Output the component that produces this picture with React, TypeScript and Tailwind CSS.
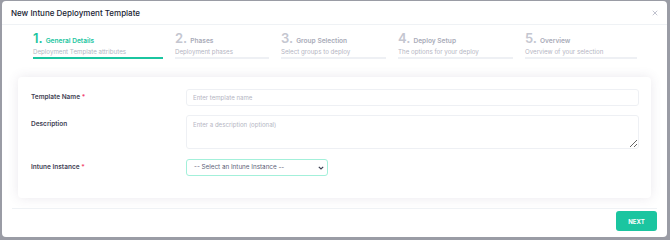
import { X } from 'lucide-react';

const STEPS = [
  { n: '1', title: 'General Details', sub: 'Deployment Template attributes', w: 'w-[130px]', active: true },
  { n: '2', title: 'Phases', sub: 'Deployment phases', w: 'w-[94px]', active: false },
  { n: '3', title: 'Group Selection', sub: 'Select groups to deploy', w: 'w-[105px]', active: false },
  { n: '4', title: 'Deploy Setup', sub: 'The options for your deploy', w: 'w-[115px]', active: false },
  { n: '5', title: 'Overview', sub: 'Overview of your selection', w: 'w-[112px]', active: false },
];

function Step({ step }: { step: (typeof STEPS)[0] }) {
  return (
    <div className={`${step.w} flex flex-col`}>
      <div className="flex items-baseline gap-[3px] h-[14px]">
        <span
          className={`text-[13px] leading-[14px] font-semibold ${step.active ? 'text-[#1bc5a0]' : 'text-[#c4c6d0]'}`}
        >
          {step.n}.
        </span>
        <span className={`text-[6.6px] font-semibold ${step.active ? 'text-[#1bc5a0]' : 'text-[#a9abb8]'}`}>
          {step.title}
        </span>
      </div>
      <div className="mt-[3px] text-[6.2px] leading-[8px] text-[#b5b5c3] whitespace-nowrap">{step.sub}</div>
      <div className={`mt-[1px] ${step.active ? 'h-[2px] bg-[#1bc5a0]' : 'h-[2px] bg-[#eef0f4]'}`} />
    </div>
  );
}

export default function App() {
  return (
    <div
      className="w-[670px] h-[240px] bg-[#9a9ca5] pl-[2px] pt-[1px] pr-[3px] pb-[3px] flex"
      style={{ fontFamily: 'Inter, "Noto Sans", sans-serif' }}
    >
      <div className="flex-1 bg-white rounded-[4px] flex flex-col overflow-hidden">
        {/* header */}
        <div className="h-[24px] flex items-center justify-between pl-[9px] pr-[8px] border-b border-[#eff2f5]">
          <span className="text-[8px] font-medium text-[#181c32]">New Intune Deployment Template</span>
          <X size={8} strokeWidth={2} className="text-[#a1a5b7]" />
        </div>

        {/* stepper */}
        <div className="flex gap-[12px] pl-[31px] pt-[6px]">
          {STEPS.map((s) => (
            <Step key={s.n} step={s} />
          ))}
        </div>

        {/* form card */}
        <div className="mx-[16px] mt-[18px] bg-white rounded-[4px] shadow-[0_0_12px_rgba(82,63,105,0.12)] pl-[13px] pr-[12px] pt-[12px] pb-[22px] flex flex-col">
          <div className="flex items-center">
            <label className="w-[155px] text-[6.5px] font-semibold text-[#3f4254]">
              Template Name <span className="text-[#f1416c]">*</span>
            </label>
            <input
              className="flex-1 h-[17px] rounded-[3px] border border-[#eef0f4] px-[6px] text-[6.1px] outline-none placeholder:text-[#b5b5c3]"
              placeholder="Enter template name"
            />
          </div>
          <div className="flex items-start mt-[9px]">
            <label className="w-[155px] pt-[5px] text-[6.5px] font-semibold text-[#3f4254]">Description</label>
            <textarea
              className="flex-1 h-[34px] rounded-[3px] border border-[#eef0f4] px-[6px] py-[4px] text-[6.1px] outline-none resize-y placeholder:text-[#b5b5c3]"
              placeholder="Enter a description (optional)"
            />
          </div>
          <div className="flex items-center mt-[10px]">
            <label className="w-[155px] text-[6.5px] font-semibold text-[#3f4254]">
              Intune Instance <span className="text-[#f1416c]">*</span>
            </label>
            <div className="w-[142px] h-[17px] rounded-[3px] border border-[#a3f0da] flex items-center justify-between pl-[7px] pr-[3px]">
              <span className="text-[6.3px] text-[#5e6278]">-- Select an Intune Instance --</span>
              <svg width="6" height="4" viewBox="0 0 6 4">
                <path d="M0.8 0.8 L3 3 L5.2 0.8" fill="none" stroke="#3f4254" strokeWidth="1.2" />
              </svg>
            </div>
          </div>
        </div>

        {/* footer */}
        <div className="mt-[10px] mx-[10px] border-t border-[#eff2f5] flex justify-end pt-[2px]">
          <button className="w-[41px] h-[20px] rounded-[3px] bg-[#1bc5a0] text-white text-[6px] font-bold">
            NEXT
          </button>
        </div>
      </div>
    </div>
  );
}
